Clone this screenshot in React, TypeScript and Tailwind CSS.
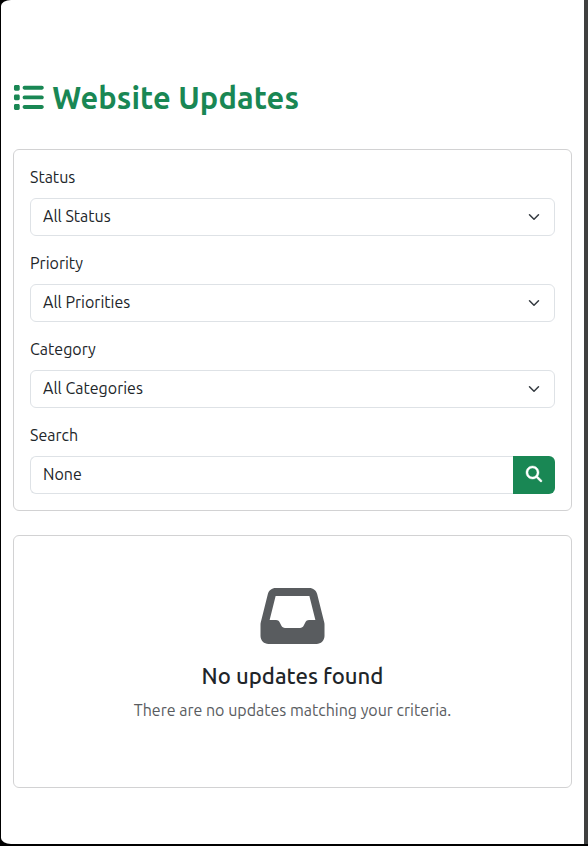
import { FaInbox, FaList, FaMagnifyingGlass } from "react-icons/fa6";

const filters = [
  { label: "Status", value: "All Status" },
  { label: "Priority", value: "All Priorities" },
  { label: "Category", value: "All Categories" },
];

function Chevron() {
  return (
    <svg viewBox="0 0 16 16" className="h-3 w-4" fill="none" stroke="#343a40" strokeWidth="2" strokeLinecap="round" strokeLinejoin="round">
      <path d="m2 5 6 6 6-6" />
    </svg>
  );
}

export default function App() {
  return (
    <div className="h-[846px] w-[588px] bg-black pb-[2px] pl-px font-[Ubuntu,'Noto_Sans',sans-serif] text-base leading-6 text-[#212529]">
      <div className="h-[844px] overflow-hidden [border-radius:10px_0_0_10px/6px_0_0_6px] border-r-4 border-[#3f4040] bg-white px-3 pt-[78px]">
        <h1 className="flex h-[39px] items-center gap-[8.5px] text-[30.77px] leading-[37px] font-semibold whitespace-nowrap text-[#198754]">
          <FaList className="size-[1em] shrink-0" />
          <span className="tracking-[0.1px]">Website Updates</span>
        </h1>

        <section className="mt-8 flex h-[362px] w-[559px] flex-col gap-4 rounded-md border border-[#d2d2d3] p-4">
          {filters.map((f) => (
            <div key={f.label} className="flex flex-col gap-2">
              <label className="-mt-px mb-px">{f.label}</label>
              <div className="flex h-[38px] items-center justify-between rounded-md border border-[#dee2e6] px-3">
                <span className="mb-0.5">{f.value}</span>
                <Chevron />
              </div>
            </div>
          ))}
          <div className="flex flex-col gap-2">
            <label className="-mt-px mb-px">Search</label>
            <div className="flex h-[38px]">
              <div className="flex flex-1 items-center rounded-l-md border border-r-0 border-[#dee2e6] pb-0.5 pl-3">None</div>
              <button className="flex w-[42px] items-center justify-center rounded-r-md bg-[#198754] pb-0.5 text-white">
                <FaMagnifyingGlass className="size-4 overflow-visible [stroke-width:14px]" />
              </button>
            </div>
          </div>
        </section>

        <section className="mt-6 flex h-[253px] w-[559px] flex-col items-center rounded-md border border-[#d2d2d3] pt-12">
          <FaInbox className="h-16 w-[65px] text-[#595c5f]" />
          <h4 className="mt-[13px] h-[29px] text-[22.15px] leading-[29px] font-medium">No updates found</h4>
          <p className="mt-2 text-[#595c5f]">There are no updates matching your criteria.</p>
        </section>
      </div>
    </div>
  );
}
